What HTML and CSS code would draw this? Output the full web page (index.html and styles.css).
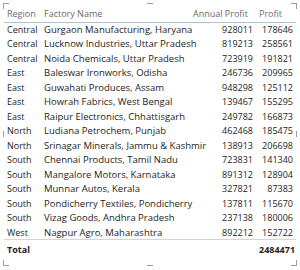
FILE: index.html
```html
<!DOCTYPE html>
<html>
  <head>
    <link rel="stylesheet" href="styles.css">
  </head>
  <body>
    <div class="visual">
      <span class="handle tl"></span>
      <span class="handle tr"></span>
      <span class="handle bl"></span>
      <span class="handle br"></span>
      <span class="handle tm"></span>
      <span class="handle bm"></span>
      <span class="handle lm"></span>
      <span class="handle rm"></span>
      <table class="grid">
        <colgroup>
          <col class="c-region">
          <col class="c-name">
          <col class="c-annual">
          <col class="c-profit">
        </colgroup>
        <thead>
          <tr>
            <th>Region</th>
            <th>Factory Name</th>
            <th>Annual Profit</th>
            <th>Profit</th>
          </tr>
        </thead>
        <tbody>
          <tr><td>Central</td><td class="name">Gurgaon Manufacturing, Haryana</td><td class="num">928011</td><td class="num">178646</td></tr>
          <tr><td>Central</td><td class="name">Lucknow Industries, Uttar Pradesh</td><td class="num">819213</td><td class="num">258561</td></tr>
          <tr><td>Central</td><td class="name">Noida Chemicals, Uttar Pradesh</td><td class="num">723919</td><td class="num">191821</td></tr>
          <tr><td>East</td><td class="name">Baleswar Ironworks, Odisha</td><td class="num">246736</td><td class="num">209965</td></tr>
          <tr><td>East</td><td class="name">Guwahati Produces, Assam</td><td class="num">948298</td><td class="num">125112</td></tr>
          <tr><td>East</td><td class="name">Howrah Fabrics, West Bengal</td><td class="num">139467</td><td class="num">155295</td></tr>
          <tr><td>East</td><td class="name">Raipur Electronics, Chhattisgarh</td><td class="num">249782</td><td class="num">166873</td></tr>
          <tr><td>North</td><td class="name">Ludiana Petrochem, Punjab</td><td class="num">462468</td><td class="num">185475</td></tr>
          <tr><td>North</td><td class="name">Srinagar Minerals, Jammu &amp; Kashmir</td><td class="num">138913</td><td class="num">206698</td></tr>
          <tr><td>South</td><td class="name">Chennai Products, Tamil Nadu</td><td class="num">723831</td><td class="num">141340</td></tr>
          <tr><td>South</td><td class="name">Mangalore Motors, Karnataka</td><td class="num">891312</td><td class="num">128904</td></tr>
          <tr><td>South</td><td class="name">Munnar Autos, Kerala</td><td class="num">327821</td><td class="num">87383</td></tr>
          <tr><td>South</td><td class="name">Pondicherry Textiles, Pondicherry</td><td class="num">137811</td><td class="num">115670</td></tr>
          <tr><td>South</td><td class="name">Vizag Goods, Andhra Pradesh</td><td class="num">237138</td><td class="num">180006</td></tr>
          <tr><td>West</td><td class="name">Nagpur Agro, Maharashtra</td><td class="num">892212</td><td class="num">152722</td></tr>
        </tbody>
        <tfoot>
          <tr><td>Total</td><td></td><td></td><td class="num">2484471</td></tr>
        </tfoot>
      </table>
    </div>
  </body>
</html>
```

FILE: styles.css
```css
* {
  margin: 0;
  padding: 0;
  box-sizing: border-box;
}

body {
  background: white;
  font-family: "Open Sans", "Liberation Sans", sans-serif;
  font-size: 9px;
  color: #252423;
}

.visual {
  position: relative;
  width: 300px;
  height: 270px;
  padding: 6px 4px 0 4px;
}

.grid {
  width: 292px;
  border-collapse: collapse;
  table-layout: fixed;
}

.c-region { width: 37px; }
.c-name { width: 149px; }
.c-annual { width: 66px; }
.c-profit { width: 40px; }

th {
  font-weight: normal;
  color: #6b6b6b;
  text-align: left;
  height: 16px;
  padding: 0 3px;
  white-space: nowrap;
  border-bottom: 1px solid #a9c4d6;
}

td {
  height: 14.5px;
  padding: 0 3px;
  white-space: nowrap;
}

td.name {
  font-size: 9.5px;
}

td.num {
  text-align: right;
}

tfoot td {
  font-weight: bold;
  height: 20px;
  border-top: 1px solid #d4d4d4;
}

.handle {
  position: absolute;
  border-color: #9e9e9e;
  border-style: solid;
  border-width: 0;
}

.tl { left: 3px; top: 3px; width: 6px; height: 6px; border-left-width: 1px; border-top-width: 1px; }
.tr { right: 3px; top: 3px; width: 6px; height: 6px; border-right-width: 1px; border-top-width: 1px; }
.bl { left: 3px; bottom: 4px; width: 6px; height: 6px; border-left-width: 1px; border-bottom-width: 1px; }
.br { right: 3px; bottom: 4px; width: 6px; height: 6px; border-right-width: 1px; border-bottom-width: 1px; }
.tm { left: 147px; top: 3px; width: 6px; border-top-width: 1px; }
.bm { left: 147px; bottom: 4px; width: 6px; border-bottom-width: 1px; }
.lm { left: 3px; top: 131px; height: 6px; border-left-width: 1px; }
.rm { right: 3px; top: 131px; height: 6px; border-right-width: 1px; }
```
